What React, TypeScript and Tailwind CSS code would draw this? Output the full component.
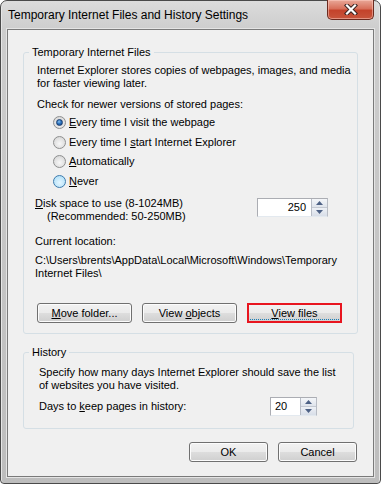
import type { ReactNode } from 'react';

function Radio({ checked, hover }: { checked?: boolean; hover?: boolean }) {
  return (
    <span
      className={
        'flex h-[13px] w-[13px] shrink-0 items-center justify-center rounded-full border ' +
        (hover
          ? 'border-[#3d7bad] bg-[radial-gradient(circle_at_50%_60%,#e4f6ff_0%,#bfe6fa_60%,#a9dbf6_100%)]'
          : 'border-[#8e8f8f] bg-[radial-gradient(circle_at_50%_60%,#f7f7f7_0%,#e0e0e0_60%,#cfcfcf_100%)]')
      }
    >
      {checked && (
        <span className="h-[7px] w-[7px] rounded-full border border-[#1b3d6e] bg-[radial-gradient(circle_at_40%_35%,#8fc3ef_0%,#2b73bf_45%,#0e3f7f_100%)]" />
      )}
    </span>
  );
}

function RadioRow({ children, checked, hover }: { children: ReactNode; checked?: boolean; hover?: boolean }) {
  return (
    <div className="flex h-[19.5px] items-center gap-[3px]">
      <Radio checked={checked} hover={hover} />
      <span>{children}</span>
    </div>
  );
}

function Spin({ value, width, right }: { value: string; width: string; right?: boolean }) {
  return (
    <div className={'flex h-[19px] border border-[#abadb3] border-b-[#e3e9ef] border-r-[#b8bcc4] bg-white ' + width}>
      <div className={'flex flex-1 items-center px-[4px] ' + (right ? 'justify-end pr-[5px]' : 'justify-start')}>{value}</div>
      <div className="flex w-[16px] flex-col border-l border-[#b7bcc6]">
        <div className="flex flex-1 items-center justify-center border-b border-[#c4c9d2] bg-[linear-gradient(#f4f6f9,#dfe4ec)]">
          <svg width="7" height="4" viewBox="0 0 7 4">
            <path d="M0 4 L3.5 0 L7 4 Z" fill="#4d6185" />
          </svg>
        </div>
        <div className="flex flex-1 items-center justify-center bg-[linear-gradient(#eef1f6,#d8dee8)]">
          <svg width="7" height="4" viewBox="0 0 7 4">
            <path d="M0 0 L3.5 4 L7 0 Z" fill="#4d6185" />
          </svg>
        </div>
      </div>
    </div>
  );
}

function Btn({ children, width, focused }: { children: ReactNode; width: string; focused?: boolean }) {
  return (
    <div
      className={
        'relative flex h-[20px] items-center justify-center rounded-[3px] border ' +
        (focused ? 'border-[#3c7fb1] ' : 'border-[#707070] ') +
        'bg-[linear-gradient(180deg,#f2f2f2_0%,#ebebeb_48%,#dddddd_52%,#cfcfcf_100%)] shadow-[inset_0_0_0_1px_#fcfcfc] ' +
        width
      }
    >
      <span>{children}</span>
      {focused && (
        <>
          <span className="absolute inset-x-[2px] bottom-[2px] border-b border-dotted border-[#1a7fb8]" />
          <span className="absolute -inset-[1px] border-[2px] border-[#e8151f]" />
        </>
      )}
    </div>
  );
}

function Group({ label, children, className }: { label: string; children: ReactNode; className: string }) {
  return (
    <div className={'relative ml-[15px] shrink-0 rounded-[3px] border border-[#d5dfe5] ' + className}>
      <span className="absolute -top-[8px] left-[5px] bg-[#f0f0f0] px-[3px] leading-[14px]">{label}</span>
      {children}
    </div>
  );
}

export default function App() {
  return (
    <div className="h-[485px] w-[387px] whitespace-nowrap bg-white font-['Liberation_Sans',Arial,sans-serif] text-[11px] leading-[13px] text-black">
      <div className="flex h-[484px] w-[381px] flex-col rounded-t-[7px] rounded-b-[4px] border border-[#4a4a4a] bg-[linear-gradient(180deg,#dcdcdc_0%,#cdcdcd_28px,#bdbdbd_100%)] px-[6px] pb-[6px] shadow-[inset_1px_0_0_#e6e6e6,inset_-1px_0_0_#e6e6e6]">
        <div className="flex h-[28px] shrink-0 items-center">
          <span className="pl-[1px] text-[12px]">Temporary Internet Files and History Settings</span>
          <div className="-mt-[1px] ml-auto flex h-[20px] w-[47px] items-center justify-center self-start rounded-b-[5px] border border-t-0 border-[#6b2a1f] bg-[linear-gradient(180deg,#e9a898_0%,#d8705b_45%,#c4432b_55%,#c8553c_100%)] shadow-[inset_0_0_0_1px_rgba(255,210,200,0.5)]">
            <svg width="14" height="11" viewBox="0 0 14 11">
              <path d="M3 1.5 L11 9.5 M11 1.5 L3 9.5" stroke="#3a2320" strokeWidth="4.2" strokeLinecap="square" />
              <path d="M3 1.5 L11 9.5 M11 1.5 L3 9.5" stroke="#ffffff" strokeWidth="2.2" strokeLinecap="square" />
            </svg>
          </div>
        </div>

        <div className="flex flex-1 flex-col border border-[#7a7a7a] bg-[#f0f0f0] shadow-[0_0_0_1px_#e4e4e4]">
          <Group label="Temporary Internet Files" className="mt-[22px] w-[335px] pb-[10px]">
            <div className="mt-[11px] pl-[13px]">
              Internet Explorer stores copies of webpages, images, and media
              <br />
              for faster viewing later.
            </div>
            <div className="mt-[8px] pl-[13px]">Check for newer versions of stored pages:</div>
            <div className="mt-[2px] flex flex-col pl-[29px]">
              <RadioRow checked>
                <u>E</u>very time I visit the webpage
              </RadioRow>
              <RadioRow>
                Every time I <u>s</u>tart Internet Explorer
              </RadioRow>
              <RadioRow>
                <u>A</u>utomatically
              </RadioRow>
              <RadioRow hover>
                <u>N</u>ever
              </RadioRow>
            </div>
            <div className="mt-[6px] flex items-start pl-[11px] pr-[29px]">
              <div>
                <u>D</u>isk space to use (8-1024MB)
                <div className="pl-[12px]">(Recommended: 50-250MB)</div>
              </div>
              <div className="ml-auto mt-[1px]">
                <Spin value="250" width="w-[71px]" right />
              </div>
            </div>
            <div className="mt-[12px] pl-[11px]">Current location:</div>
            <div className="mt-[6px] pl-[11px]">
              C:\Users\brents\AppData\Local\Microsoft\Windows\Temporary
              <br />
              Internet Files\
            </div>
            <div className="mt-[23px] flex gap-[10px] pl-[13px]">
              <Btn width="w-[95px]">
                <u>M</u>ove folder...
              </Btn>
              <Btn width="w-[95px]">
                View <u>o</u>bjects
              </Btn>
              <Btn width="w-[95px]" focused>
                <u>V</u>iew files
              </Btn>
            </div>
          </Group>

          <Group label="History" className="mt-[18px] w-[331px] pb-[12px]">
            <div className="mt-[13px] pl-[15px]">
              Specify how many days Internet Explorer should save the list
              <br />
              of websites you have visited.
            </div>
            <div className="mt-[5px] flex h-[19px] items-center pl-[15px] pr-[36px]">
              <span>
                Days to <u>k</u>eep pages in history:
              </span>
              <div className="ml-auto">
                <Spin value="20" width="w-[47px]" />
              </div>
            </div>
          </Group>

          <div className="mt-[13px] flex shrink-0 justify-end gap-[10px] pr-[16px]">
            <Btn width="w-[79px]">OK</Btn>
            <Btn width="w-[79px]">Cancel</Btn>
          </div>
        </div>
      </div>
    </div>
  );
}
